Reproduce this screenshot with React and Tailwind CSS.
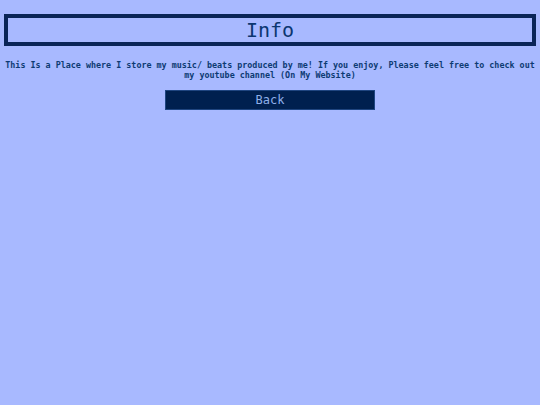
import React from 'react';

const mono = { fontFamily: '"DejaVu Sans Mono", "Liberation Mono", monospace' };

export default function App() {
  return (
    <div className="min-h-screen w-full bg-[#a8b9ff] px-[4px] pt-[14px]" style={mono}>
      {/* Header */}
      <div className="flex h-[32px] items-center justify-center border-4 border-[#0a2557]">
        <h1 className="text-[20px] leading-none text-[#0b3670]">Info</h1>
      </div>

      <p className="mt-[14px] text-center text-[8.4px] font-bold leading-[10px] text-[#0d3b73]">
        This Is a Place where I store my music/ beats produced by me! If you enjoy, Please feel free to check out my youtube channel (On My Website)
      </p>

      <button className="mx-auto mt-[10px] block h-[20px] w-[210px] border border-[#1f4580] bg-[#00204f] text-[12px] leading-none text-[#8fb0ea]">
        Back
      </button>
    </div>
  );
}
